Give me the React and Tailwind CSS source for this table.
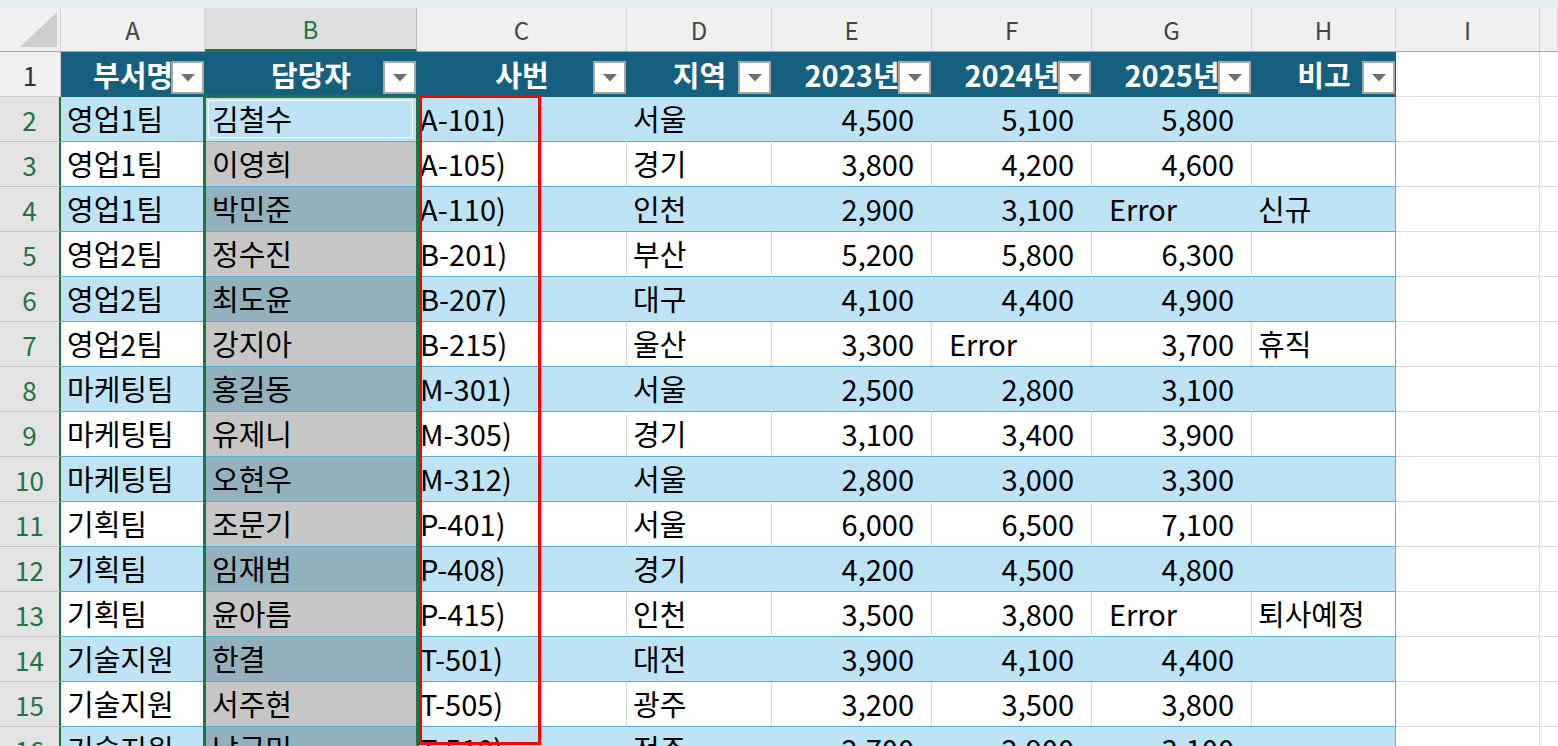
import React from "react";

const COLS = [
  { key: "A", w: "w-[144px]" },
  { key: "B", w: "w-[212px]" },
  { key: "C", w: "w-[210px]" },
  { key: "D", w: "w-[145px]" },
  { key: "E", w: "w-[160px]" },
  { key: "F", w: "w-[160px]" },
  { key: "G", w: "w-[160px]" },
  { key: "H", w: "w-[144px]" },
  { key: "I", w: "w-[144px]" },
  { key: "", w: "w-[18px]" },
];

const HEADERS = ["부서명", "담당자", "사번", "지역", "2023년", "2024년", "2025년", "비고"];

const ROWS = [
  ["영업1팀", "김철수", "A-101)", "서울", "4,500", "5,100", "5,800", ""],
  ["영업1팀", "이영희", "A-105)", "경기", "3,800", "4,200", "4,600", ""],
  ["영업1팀", "박민준", "A-110)", "인천", "2,900", "3,100", "Error", "신규"],
  ["영업2팀", "정수진", "B-201)", "부산", "5,200", "5,800", "6,300", ""],
  ["영업2팀", "최도윤", "B-207)", "대구", "4,100", "4,400", "4,900", ""],
  ["영업2팀", "강지아", "B-215)", "울산", "3,300", "Error", "3,700", "휴직"],
  ["마케팅팀", "홍길동", "M-301)", "서울", "2,500", "2,800", "3,100", ""],
  ["마케팅팀", "유제니", "M-305)", "경기", "3,100", "3,400", "3,900", ""],
  ["마케팅팀", "오현우", "M-312)", "서울", "2,800", "3,000", "3,300", ""],
  ["기획팀", "조문기", "P-401)", "서울", "6,000", "6,500", "7,100", ""],
  ["기획팀", "임재범", "P-408)", "경기", "4,200", "4,500", "4,800", ""],
  ["기획팀", "윤아름", "P-415)", "인천", "3,500", "3,800", "Error", "퇴사예정"],
  ["기술지원", "한결", "T-501)", "대전", "3,900", "4,100", "4,400", ""],
  ["기술지원", "서주현", "T-505)", "광주", "3,200", "3,500", "3,800", ""],
  ["기술지원", "남궁민", "T-510)", "전주", "2,700", "2,900", "3,100", ""],
];

const PAD = ["pl-[6px]", "pl-[7px]", "pl-[3px]", "pl-[6px]", "", "", "", "pl-[6px]"];

function FilterButton() {
  return (
    <div className="absolute right-[1px] top-[9px] w-[33px] h-[33px] bg-white border-2 border-[#a6a6a6] flex items-center justify-center">
      <svg width="14" height="8" viewBox="0 0 14 8">
        <polygon points="0,0 14,0 7,7.5" fill="#6f6f6f" />
      </svg>
    </div>
  );
}

function ColumnHeader() {
  return (
    <div className="flex h-[44px] bg-[#f0f0f0] border-b border-[#a9a9a9]">
      <div className="w-[61px] shrink-0 border-r border-[#d0d0d0] relative">
        <svg className="absolute left-0 top-0" width="61" height="44" viewBox="0 0 61 44">
          <polygon points="20,39 57,39 57,4" fill="#cdcdcd" />
        </svg>
      </div>
      {COLS.map((c) => (
        <div
          key={c.key || "end"}
          className={`${c.w} shrink-0 flex items-center justify-center text-[24px] border-r ${
            c.key === "B"
              ? "bg-[#dedede] text-[#217346] border-[#bdbdbd] border-b-[3px] border-b-[#217346] -mb-px"
              : "text-[#444444] border-[#d6d6d6]"
          }`}
        >
          {c.key}
        </div>
      ))}
    </div>
  );
}

function TableHeader() {
  return (
    <div className="flex h-[45px]">
      <div className="w-[61px] shrink-0 bg-[#f0f0f0] border-r border-b border-[#c9c9c9] flex items-center justify-center text-[26px] text-[#333333]">
        1
      </div>
      {HEADERS.map((h, i) => (
        <div
          key={h}
          className={`${COLS[i].w} shrink-0 relative bg-[#16607f] flex items-center justify-center text-white font-bold text-[29px] whitespace-nowrap`}
        >
          {h}
          <FilterButton />
        </div>
      ))}
      <div className="w-[144px] shrink-0 bg-white border-r border-b border-[#dadada]" />
      <div className="w-[18px] shrink-0 bg-white border-b border-[#dadada]" />
    </div>
  );
}

function DataRow({ num, cells }) {
  const band = num % 2 === 0;
  return (
    <div className="flex h-[45px]">
      <div className="w-[61px] shrink-0 bg-[#e3e3e3] border-r-2 border-r-[#217346] border-b border-b-[#c6c6c6] flex items-center justify-center text-[26px] text-[#217346]">
        {num}
      </div>
      {cells.map((v, i) => {
        const isNum = i >= 4 && i <= 6;
        const isErr = v === "Error";
        let bg = band ? "bg-[#bee3f4]" : "bg-white";
        if (i === 1 && num > 2) bg = band ? "bg-[#93b1bd]" : "bg-[#c6c6c6]";
        const vline = i === 7 ? "border-r-[#5aaedb]" : band ? "border-r-transparent" : "border-r-[#d6d6d6]";
        const align = isNum && !isErr ? "justify-end pr-[17px]" : isErr ? "justify-start pl-[17px]" : `justify-start ${PAD[i]}`;
        return (
          <div
            key={i}
            className={`${COLS[i].w} shrink-0 ${bg} border-b border-b-[#5aaedb] border-r ${vline} flex items-center ${align} text-[29px] text-black whitespace-nowrap overflow-hidden relative`}
          >
            {i === 1 && num === 2 && (
              <div className="absolute inset-[3px] border border-white" />
            )}
            <span className="relative">{v}</span>
          </div>
        );
      })}
      <div className="w-[144px] shrink-0 bg-white border-r border-b border-[#dadada]" />
      <div className="w-[18px] shrink-0 bg-white border-b border-[#dadada]" />
    </div>
  );
}

export default function App() {
  return (
    <div
      className="w-[1558px] h-[746px] overflow-hidden bg-white relative"
      style={{ fontFamily: '"Noto Sans CJK KR", "Noto Sans", sans-serif' }}
    >
      <div className="h-[8px] bg-[#e7eef1]" />
      <ColumnHeader />
      <TableHeader />
      {ROWS.map((r, i) => (
        <DataRow key={i} num={i + 2} cells={r} />
      ))}

      {/* selection outline B2:B16 */}
      <div className="absolute left-[203px] top-[95px] w-[216px] h-[700px] border-[3px] border-[#217346] pointer-events-none" />
      {/* red box over column C */}
      <div className="absolute left-[419px] top-[95px] w-[122px] h-[650px] border-[3px] border-[#ff0000] pointer-events-none" />
    </div>
  );
}
